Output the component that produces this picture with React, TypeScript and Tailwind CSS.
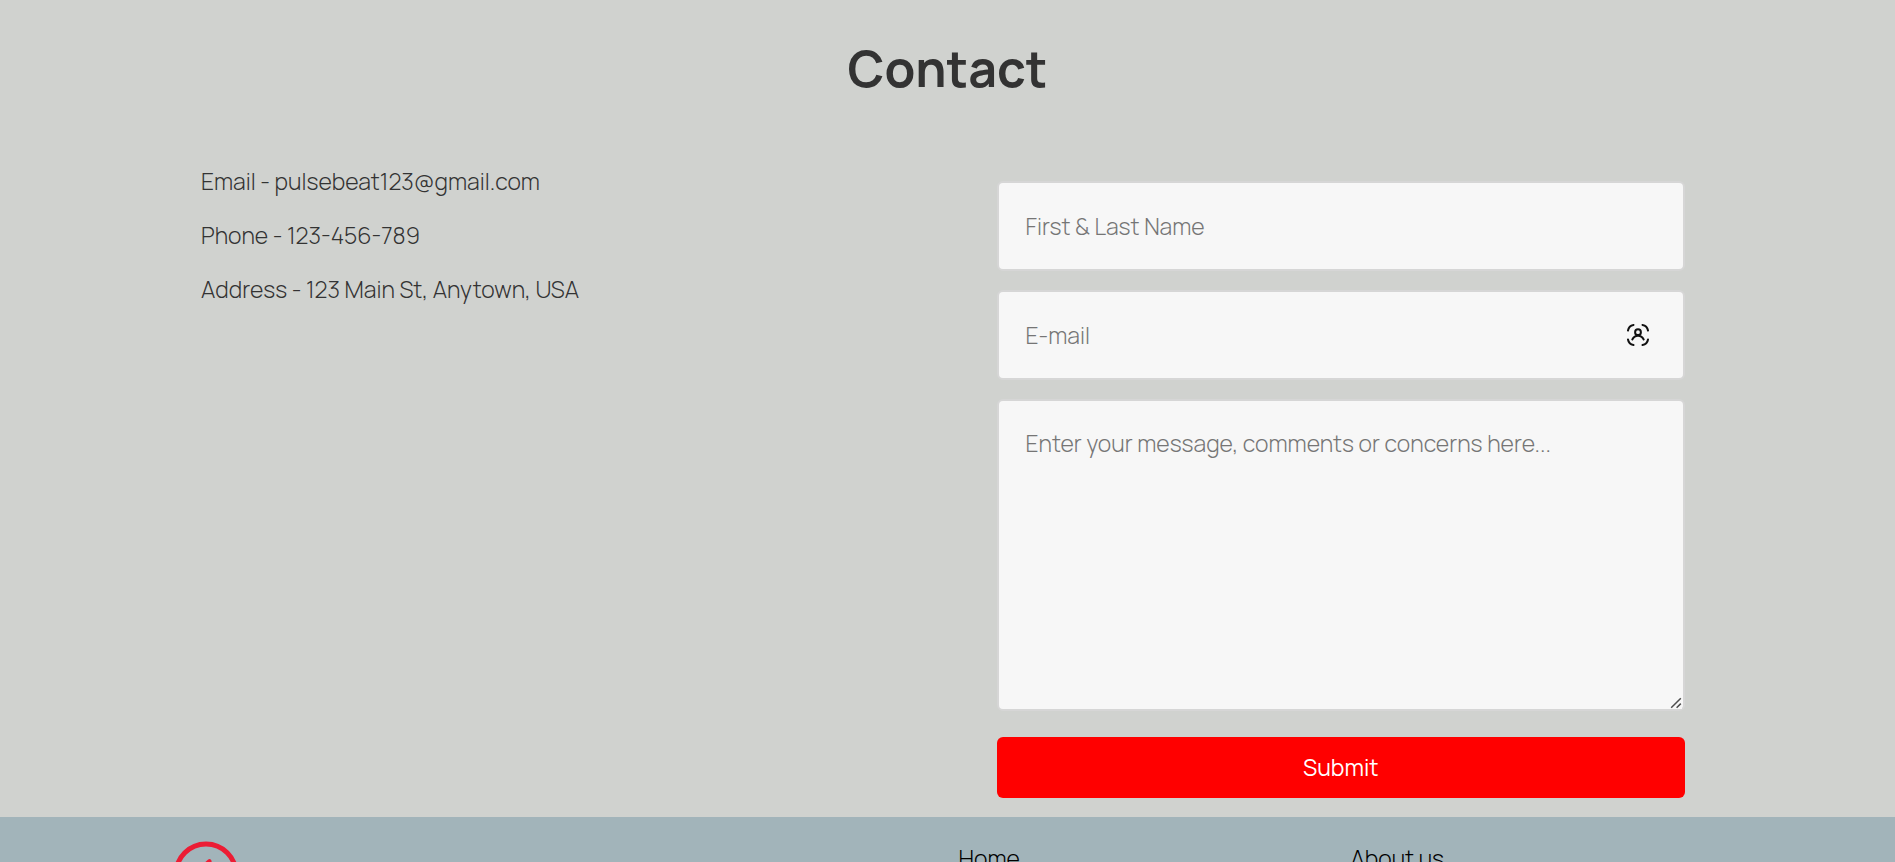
import React from "react";

const field =
  "block w-full rounded-md border-2 border-[#d6d6d6] bg-[#f7f7f7] px-[27px] text-[23px] font-light text-[#333333] placeholder:text-[#757575] placeholder:opacity-100";

function ScanUserIcon() {
  return (
    <svg
      viewBox="0 0 22 22"
      className="h-[22px] w-[22px]"
      fill="none"
      stroke="#111111"
      strokeWidth="2"
      strokeLinecap="round"
      aria-hidden="true"
    >
      <path d="M1 6.500C1.500 3.500 3.500 1.500 6.500 1M15.500 1C18.500 1.500 20.500 3.500 21 6.500M21 15.500C20.500 18.500 18.500 20.500 15.500 21M6.500 21C3.500 20.500 1.500 18.500 1 15.500" />
      <circle cx="11" cy="8.200" r="2.900" />
      <path d="M5.300 15.500C6.800 12.800 8.800 11.800 11 11.800C13.200 11.800 15.200 12.800 16.700 15.500" />
    </svg>
  );
}

function PulseLogo() {
  return (
    <svg viewBox="0 0 66 66" className="h-[66px] w-[66px]" fill="none" stroke="#ec1c34" aria-hidden="true">
      <circle cx="33" cy="33" r="30" strokeWidth="5" />
      <path
        d="M6 36H22L32 24L36.500 20L41 46L45 34H60"
        strokeWidth="4"
        strokeLinecap="round"
        strokeLinejoin="round"
      />
    </svg>
  );
}

function ResizeGrip() {
  return (
    <svg
      viewBox="0 0 12 12"
      className="pointer-events-none absolute right-[3px] bottom-[2px] h-3 w-3 bg-[#f7f7f7]"
      fill="none"
      stroke="#4d4d4d"
      strokeWidth="1.500"
      aria-hidden="true"
    >
      <path d="M1.200 10.800L10.800 1.200M6.600 10.800L10.800 6.600" />
    </svg>
  );
}

export default function App() {
  return (
    <div className="h-screen overflow-hidden bg-[#d0d2cf] font-['Manrope','Inter',sans-serif] text-[23px] font-light text-[#333333]">
      <main>
        <h1 className="pt-[37px] text-center text-[50px] leading-[62px] font-bold">Contact</h1>
        <section className="mx-auto grid max-w-[1495px] grid-cols-2 pt-[65px] pb-[19px]">
          <address className="flex flex-col gap-5 pl-px leading-[34px] not-italic">
            <p>Email - pulsebeat123@gmail.com</p>
            <p>Phone - 123-456-789</p>
            <p>Address - 123 Main St, Anytown, USA</p>
          </address>
          <form className="flex flex-col pt-[17px] pr-[10px] pl-[49px]" onSubmit={(e) => e.preventDefault()}>
            <div className="flex flex-col gap-[19px]">
              <input type="text" aria-label="First & Last Name" placeholder="First & Last Name" className={`${field} h-[90px]`} />
              <div className="relative">
                <input type="email" aria-label="E-mail" placeholder="E-mail" className={`${field} h-[90px]`} />
                <span className="pointer-events-none absolute inset-y-0 right-9 flex items-center">
                  <ScanUserIcon />
                </span>
              </div>
              <div className="relative">
                <textarea
                  aria-label="Message"
                  placeholder="Enter your message, comments or concerns here..."
                  className={`${field} h-[312px] resize-none py-[25px] leading-[34px]`}
                />
                <ResizeGrip />
              </div>
            </div>
            <button type="submit" className="mt-[26px] h-[61px] rounded-md bg-[#ff0000] font-normal text-white">
              Submit
            </button>
          </form>
        </section>
      </main>
      <footer className="bg-[#a2b4ba] text-black">
        <div className="mx-auto grid h-[160px] max-w-[1568px] grid-cols-4 items-start pt-6">
          <a href="#top" aria-label="PulseBeat" className="col-span-2 justify-self-start pl-[9px]">
            <PulseLogo />
          </a>
          <a href="#home" className="px-[11px] leading-[34px]">Home</a>
          <a href="#about" className="px-[11px] leading-[34px]">About us</a>
        </div>
      </footer>
    </div>
  );
}
